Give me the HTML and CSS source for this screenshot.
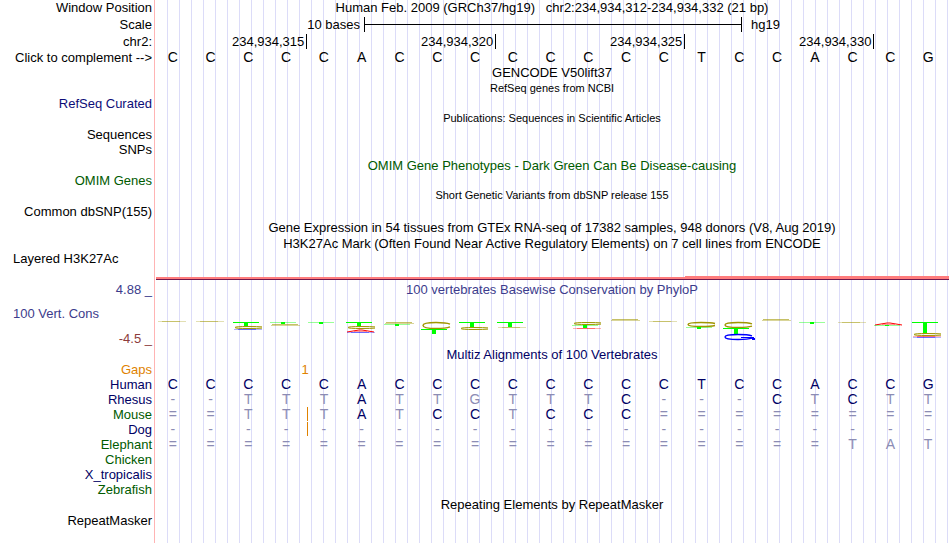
FILE: index.html
```html
<!DOCTYPE html>
<html lang="en">
<head>
	<meta charset="utf-8">
	<title>Human chr2:234,934,312-234,934,332</title>
	<link rel="stylesheet" href="styles.css">
</head>
<body>
	<main class="browser">
		<div class="row mid"><div class="label">Window Position</div><div class="title">Human Feb. 2009 (GRCh37/hg19) &nbsp; chr2:234,934,312-234,934,332 (21 bp)</div></div>
		<div class="row tall">
			<div class="label">Scale</div>
			<div class="scale">
				<span class="scale-size">10 bases</span>
				<span class="scale-bar"></span>
				<span class="scale-db">hg19</span>
			</div>
		</div>
		<div class="row tall">
			<div class="label">chr2:</div>
			<div class="ruler">
				<span class="first">234,934,315</span>
				<span>234,934,320</span>
				<span>234,934,325</span>
				<span>234,934,330</span>
			</div>
		</div>
		<div class="row"><div class="label">Click to complement --&gt;</div><div class="bases plain" data-seq="CCCCCACCCCCCCCTCCACCG"></div></div>

		<div class="row mid"><div class="title">GENCODE V50lift37</div></div>
		<div class="row"><div class="title small">RefSeq genes from NCBI</div></div>
		<div class="row"><div class="label refseq">RefSeq Curated</div></div>
		<div class="row mid"><div class="title small">Publications: Sequences in Scientific Articles</div></div>
		<div class="row"><div class="label">Sequences</div></div>
		<div class="row mid"><div class="label">SNPs</div></div>
		<div class="row"><div class="title omim">OMIM Gene Phenotypes - Dark Green Can Be Disease-causing</div></div>
		<div class="row"><div class="label omim">OMIM Genes</div></div>
		<div class="row mid"><div class="title small">Short Genetic Variants from dbSNP release 155</div></div>
		<div class="row"><div class="label">Common dbSNP(155)</div></div>
		<div class="row tall"><div class="title">Gene Expression in 54 tissues from GTEx RNA-seq of 17382 samples, 948 donors (V8, Aug 2019)</div></div>
		<div class="row"><div class="title">H3K27Ac Mark (Often Found Near Active Regulatory Elements) on 7 cell lines from ENCODE</div></div>
		<div class="row"><div class="label left">Layered H3K27Ac</div></div>
		<div class="row signal-row"><div class="signal"><span class="low"></span><span class="high"></span></div></div>

		<div class="row"><div class="label cons">4.88 _</div><div class="title cons">100 vertebrates Basewise Conservation by PhyloP</div></div>
		<div class="row wiggle">
			<div class="wiggle-labels">
				<div class="label left cons">100 Vert. Cons</div>
				<div class="label cons-min">-4.5 _</div>
			</div>
			<svg id="logo" viewBox="0 0 796 26" preserveAspectRatio="none"></svg>
		</div>
		<div class="row"><div class="title multiz">Multiz Alignments of 100 Vertebrates</div></div>
		<div class="row"><div class="label gaps">Gaps</div><div class="gap-count"><span>1</span></div></div>
		<div class="row"><div class="label blue">Human</div><div class="bases" data-seq="CCCCCACCCCCCCCTCCACCG"></div></div>
		<div class="row"><div class="label blue">Rhesus</div><div class="bases" data-seq="--TTTATTGTTTC---CTCTT"></div></div>
		<div class="row"><div class="label green">Mouse</div><div class="bases" data-seq="==TTTATCCTCCC========" data-insert="4"></div></div>
		<div class="row"><div class="label blue">Dog</div><div class="bases" data-seq="---------------------" data-insert="4"></div></div>
		<div class="row"><div class="label green">Elephant</div><div class="bases" data-seq="==================TAT"></div></div>
		<div class="row"><div class="label green">Chicken</div></div>
		<div class="row"><div class="label blue">X_tropicalis</div></div>
		<div class="row"><div class="label green">Zebrafish</div></div>
		<div class="row mid"><div class="title">Repeating Elements by RepeatMasker</div></div>
		<div class="row"><div class="label">RepeatMasker</div></div>
	</main>

	<script>
		var human = "CCCCCACCCCCCCCTCCACCG";

		document.querySelectorAll(".bases").forEach(function (row) {
			row.dataset.seq.split("").forEach(function (base, i) {
				var cell = document.createElement("span");
				cell.textContent = base;
				if (base !== human[i]) cell.className = "diff";
				if (row.dataset.insert == i) cell.classList.add("insert");
				row.appendChild(cell);
			});
		});

		// conservation logo, one list per base: [letter, top, height, faint]
		var stacks = [
			[["C", 3, 1]],
			[["C", 3, 1]],
			[["T", 4, 4], ["C", 8, 3], ["G", 11, 1]],
			[["T", 4, 2, 1], ["C", 6, 2]],
			[["T", 4, 2, 1]],
			[["T", 4, 4], ["C", 8, 3], ["A", 11, 3], ["G", 14, 1]],
			[["C", 4, 2], ["T", 6, 2, 1]],
			[["C", 4, 7], ["T", 11, 5]],
			[["T", 4, 5], ["C", 9, 3]],
			[["T", 4, 5], ["C", 9, 1]],
			[],
			[["C", 4, 3], ["T", 7, 3, 1], ["A", 10, 1]],
			[["C", 1, 2]],
			[["C", 3, 1]],
			[["C", 4, 5], ["T", 9, 2, 1]],
			[["C", 4, 6], ["T", 10, 6], ["G", 16, 6]],
			[["C", 1, 2]],
			[["T", 4, 2, 1]],
			[["C", 4, 1]],
			[["A", 4, 3], ["T", 7, 1, 1]],
			[["T", 4, 11], ["C", 15, 3], ["A", 18, 1], ["G", 19, 1]]
		];
		var colors = { A: "#ff0000", C: "#a09600", G: "#0000ff", T: "#00ff00" };

		function rect(x, y, w, h, color, opacity) {
			return '<rect x="' + x + '" y="' + y + '" width="' + w + '" height="' + h +
				'" fill="' + color + '" opacity="' + (opacity || 1) + '"/>';
		}

		function mark(x, item) {
			var letter = item[0], y = item[1], h = item[2];
			var color = colors[letter];
			var stroke = ' fill="none" stroke="' + color + '" stroke-width="' + (h > 3 ? 1.4 : 1) + '" ';
			if (letter === "T") {
				return rect(x + 3, y, 26, 1, color, item[3] ? 0.4 : 1) + rect(x + 14, y, 4, h, color);
			}
			if (h === 1) {
				return rect(x + 4, y, 28, 1, color, 0.3) + rect(x + 8, y, 18, 1, color, 0.4);
			}
			if (letter === "A") {
				return '<polyline points="' + [x + 4, y + h, x + 16, y + 1, x + 19, y + 1, x + 31, y + h].join(" ") + '"' + stroke + '/>' +
					rect(x + 11, y + h - 1, 13, 1, color, 0.4);
			}
			if (h === 2) {
				return rect(x + 5, y, 26, 1, color, 0.6) + rect(x + 4, y + 1, 29, 1, color, 0.4);
			}
			// open ring, the gap faces right
			var top = y + 0.5, mid = y + h / 2, low = y + h - 0.5;
			var ring = '<path d="M' + (x + 32) + ' ' + (mid - h / 5) + 'Q' + (x + 28) + ' ' + top + ' ' + (x + 18) + ' ' + top +
				'Q' + (x + 5) + ' ' + top + ' ' + (x + 5) + ' ' + mid + 'Q' + (x + 5) + ' ' + low + ' ' + (x + 18) + ' ' + low +
				'Q' + (x + 28) + ' ' + low + ' ' + (x + 32) + ' ' + (mid + h / 5) + '"' + stroke + '/>';
			if (letter === "G") {
				ring += rect(x + 21, y + 3, 13, 1, color) + rect(x + 32, y + 4, 3, 2, color);
			}
			return ring;
		}

		document.getElementById("logo").innerHTML = stacks.map(function (stack, i) {
			var x = Math.round(i * 793 / 21);
			return stack.map(function (item) { return mark(x, item); }).join("");
		}).join("");
	</script>
</body>
</html>
```
FILE: styles.css
```css
body {
	margin: 0;
	background-color: #fff;
	color: #000;
	font-family: "Liberation Sans", Arial, sans-serif;
	font-size: 13px;
	line-height: 15px;
}

/* pink edge of the image, then a guide line every 12px */
.browser {
	min-height: 100vh;
	background-image:
		linear-gradient(to right, #ffb4b4 1px, #fff 1px, #fff 13px, transparent 13px),
		repeating-linear-gradient(to right, transparent 0 1px, #dcdcf8 1px 2px, transparent 2px 12px);
	background-position: 154px 0;
	background-repeat: no-repeat;
}

.row {
	display: grid;
	grid-template-columns: 154px 1fr;
	min-height: 15px;
}

.mid {
	min-height: 16px;
}

.tall {
	min-height: 17px;
	align-items: center;
}

.label {
	grid-column: 1;
	padding-right: 2px;
	text-align: right;
	white-space: nowrap;
}

.left {
	padding-left: 13px;
	text-align: left;
}

.title {
	grid-column: 2;
	text-align: center;
	white-space: nowrap;
}

.small {
	font-size: 11px;
}

.refseq {
	color: #0c0c78;
}

.omim,
.green {
	color: #005a00;
}

.blue,
.multiz {
	color: #000064;
}

.cons {
	color: #3c3c8c;
}

.cons-min {
	color: #8c3c3c;
}

.gaps {
	color: #e08200;
}

.scale,
.ruler {
	display: grid;
	margin-left: 2px;
}

.scale {
	grid-template-columns: repeat(42, 1fr);
}

.scale-size {
	grid-column: 1 / 12;
	padding-right: 4px;
	text-align: right;
}

.scale-bar {
	grid-column: 12 / 32;
	border: solid #000;
	border-width: 0 1px;
	background: linear-gradient(#000, #000) center / 100% 1px no-repeat;
}

.scale-db {
	grid-column: 32 / 42;
	padding-left: 9px;
}

.ruler {
	grid-template-columns: repeat(21, 1fr);
}

.ruler span {
	grid-column: span 5;
	padding-right: 2px;
	border-right: 1px solid #000;
	text-align: right;
}

.ruler .first {
	grid-column: span 4;
}

.bases,
.gap-count {
	display: grid;
	grid-template-columns: repeat(21, 1fr);
	margin-right: 3px;
	color: #000064;
	text-align: center;
}

.bases {
	font-size: 14px;
}

.plain {
	color: #000;
}

.diff {
	color: #8c8cb4;
}

.insert {
	position: relative;
}

.insert::before {
	content: "";
	position: absolute;
	top: 0;
	left: 2px;
	width: 1px;
	height: 14px;
	background-color: #e08200;
}

.gap-count {
	color: #e08200;
}

.gap-count span {
	grid-column: 4 / 6;
}

.signal-row {
	min-height: 0;
	padding: 10px 0 2px;
}

.signal {
	display: grid;
	grid-column: 2;
	grid-template-columns: 2fr 1fr;
	align-items: end;
	margin: 0 1px 0 2px;
	border-bottom: 1px solid #70184c;
}

.low {
	height: 2px;
	background-color: #ff7d7d;
}

.high {
	height: 3px;
	background-color: #ff7d7d;
}

.wiggle {
	padding-bottom: 1px;
}

.wiggle-labels {
	display: grid;
	gap: 10px;
	padding-top: 9px;
}

#logo {
	align-self: end;
	width: 100%;
	height: 26px;
	margin-bottom: 2px;
}
```
